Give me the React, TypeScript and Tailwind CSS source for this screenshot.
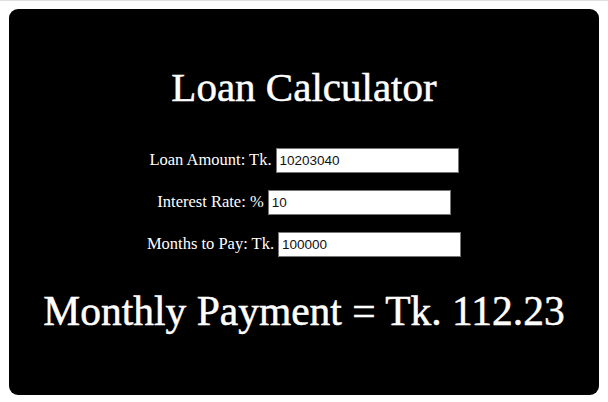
import React from 'react';

function Row({ label, value }: { label: string; value: string }) {
	return (
		<div className="flex items-center justify-center gap-[4px]">
			<label className="text-[16.5px] leading-none">{label}</label>
			<input
				type="text"
				defaultValue={value}
				className="w-[183px] h-[25px] bg-white text-[#111] px-[3px] text-[13.5px] border border-[#767676] outline-none [font-family:'Liberation_Sans',Arial,sans-serif]"
			/>
		</div>
	);
}

export default function App() {
	return (
		<div className="w-[608px] h-[402px] bg-white border-t border-[#e0e0e0] px-[9px] pt-[8px]">
			<section className="h-[386px] bg-black rounded-[9px] text-white flex flex-col items-center [font-family:'Liberation_Serif','Times_New_Roman',serif]">
				<h1 className="mt-[58px] text-[41px] leading-none whitespace-nowrap [-webkit-text-stroke:0.5px_white]">
					Loan Calculator
				</h1>
				<div className="mt-[40px] flex flex-col gap-[17px]">
					<Row label="Loan Amount: Tk." value="10203040" />
					<Row label="Interest Rate: %" value="10" />
					<Row label="Months to Pay: Tk." value="100000" />
				</div>
				<p className="mt-[34px] text-[41.5px] leading-none whitespace-nowrap [-webkit-text-stroke:0.5px_white]">
					Monthly Payment = Tk. 112.23
				</p>
			</section>
		</div>
	);
}
